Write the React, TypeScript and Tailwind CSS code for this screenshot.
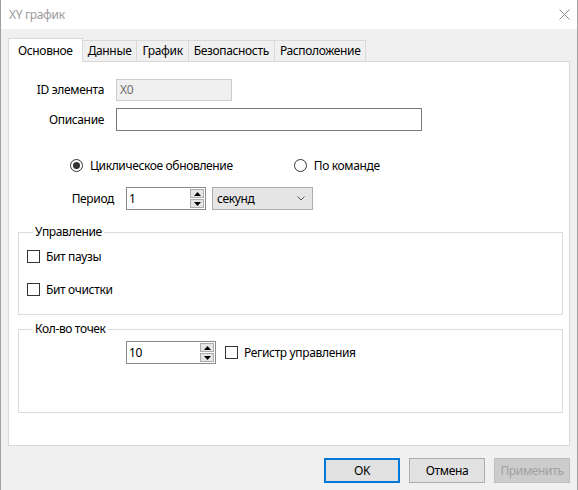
import { useState } from "react";

const font = "font-['Noto_Sans','Segoe_UI',sans-serif] tracking-[-0.35px]";

function Spinner({ value, width }: { value: string; width: string }) {
  return (
    <div className={`relative flex h-[23px] items-center border border-[#8a8a8a] bg-white ${width}`}>
      <span className="pl-[2px] text-[12px] leading-none text-black">{value}</span>
      <div className="absolute right-[1px] top-[1px] flex flex-col gap-[1px]">
        <div className="flex h-[9px] w-[14px] items-center justify-center border border-[#adadad] bg-[#e5e5e5]">
          <svg width="7" height="4" viewBox="0 0 7 4">
            <path d="M0 4 L3.5 0 L7 4 Z" fill="#000" />
          </svg>
        </div>
        <div className="flex h-[9px] w-[14px] items-center justify-center border border-[#adadad] bg-[#e5e5e5]">
          <svg width="7" height="4" viewBox="0 0 7 4">
            <path d="M0 0 L7 0 L3.5 4 Z" fill="#000" />
          </svg>
        </div>
      </div>
    </div>
  );
}

function Radio({ checked, label, onClick }: { checked: boolean; label: string; onClick: () => void }) {
  return (
    <button type="button" onClick={onClick} className="flex items-center gap-[7px]">
      <span className="flex h-[13px] w-[13px] items-center justify-center rounded-full border border-[#333]">
        {checked && <span className="h-[7px] w-[7px] rounded-full bg-[#333]" />}
      </span>
      <span className="text-[12px] leading-none text-black">{label}</span>
    </button>
  );
}

function Check({ label }: { label: string }) {
  const [on, setOn] = useState(false);
  return (
    <button type="button" onClick={() => setOn(!on)} className="flex items-center gap-[6px]">
      <span className="flex h-[13px] w-[13px] items-center justify-center border border-[#333] bg-white">
        {on && (
          <svg width="9" height="9" viewBox="0 0 9 9">
            <path d="M1 4.5 L3.5 7 L8 1.5" stroke="#333" strokeWidth="1.4" fill="none" />
          </svg>
        )}
      </span>
      <span className="text-[12px] leading-none text-black">{label}</span>
    </button>
  );
}

function Group({ title, className, children }: { title: string; className: string; children: React.ReactNode }) {
  return (
    <div className={`relative ml-[9px] w-[545px] border border-[#dcdcdc] ${className}`}>
      <span className="absolute left-[14px] top-[-9px] bg-white px-[2px] text-[12px] leading-[16px] text-black">
        {title}
      </span>
      {children}
    </div>
  );
}

const tabs = ["Основное", "Данные", "График", "Безопасность", "Расположение"];

export default function App() {
  const [mode, setMode] = useState<"cycle" | "cmd">("cycle");
  const [tab, setTab] = useState(0);

  return (
    <div className={`flex h-[490px] w-[578px] flex-col border-x border-[#a0a0a0] bg-[#f0f0f0] ${font}`}>
      {/* title bar */}
      <div className="flex h-[29px] items-center justify-between bg-white pl-[8px] pr-[6px]">
        <span className="text-[12px] text-[#9a9a9a]">XY график</span>
        <svg width="11" height="11" viewBox="0 0 11 11" className="mr-[1px]">
          <path d="M0.5 0.5 L10.5 10.5 M10.5 0.5 L0.5 10.5" stroke="#8c8c8c" strokeWidth="1" />
        </svg>
      </div>

      {/* tabs */}
      <div className="ml-[7px] mt-[9px] flex h-[23px] items-end">
        {tabs.map((t, i) =>
          i === tab ? (
            <button
              key={t}
              onClick={() => setTab(i)}
              className="relative z-10 -mb-px flex h-[24px] items-start border border-b-0 border-[#d9d9d9] bg-white px-[9px] pt-[3px] text-[12px] text-black"
            >
              {t}
            </button>
          ) : (
            <button
              key={t}
              onClick={() => setTab(i)}
              className="-ml-px flex h-[21px] items-center border border-b-0 border-[#d9d9d9] bg-[#f0f0f0] px-[5px] text-[12px] text-black first:ml-0"
            >
              {t}
            </button>
          )
        )}
      </div>

      {/* page */}
      <div className="ml-[7px] flex h-[385px] w-[562px] flex-col border border-[#d9d9d9] bg-white">
        <div className="mt-[17px] flex items-center">
          <span className="w-[95px] text-right text-[12px] text-black">ID элемента</span>
          <div className="ml-[12px] flex h-[22px] w-[116px] items-center border border-[#cccccc] bg-[#f0f0f0] pl-[3px] text-[12px] text-[#6d6d6d]">
            X0
          </div>
        </div>
        <div className="mt-[7px] flex items-center">
          <span className="w-[95px] text-right text-[12px] text-black">Описание</span>
          <div className="ml-[12px] h-[23px] w-[306px] border border-[#7a7a7a] bg-white" />
        </div>

        <div className="ml-[61px] mt-[28px] flex h-[13px] items-center">
          <Radio checked={mode === "cycle"} label="Циклическое обновление" onClick={() => setMode("cycle")} />
          <div className="ml-[61px]">
            <Radio checked={mode === "cmd"} label="По команде" onClick={() => setMode("cmd")} />
          </div>
        </div>

        <div className="mt-[15px] flex items-center">
          <span className="w-[105px] text-right text-[12px] text-black">Период</span>
          <div className="ml-[12px]">
            <Spinner value="1" width="w-[80px]" />
          </div>
          <div className="ml-[6px] flex h-[23px] w-[101px] items-center justify-between border border-[#adadad] bg-[#e5e5e5] pl-[4px] pr-[7px] text-[12px] text-black">
            <span>секунд</span>
            <svg width="8" height="5" viewBox="0 0 8 5">
              <path d="M0.5 0.5 L4 4 L7.5 0.5" stroke="#555" strokeWidth="1" fill="none" />
            </svg>
          </div>
        </div>

        <Group title="Управление" className="mt-[22px] h-[83px]">
          <div className="ml-[8px] mt-[17px]">
            <Check label="Бит паузы" />
          </div>
          <div className="ml-[8px] mt-[20px]">
            <Check label="Бит очистки" />
          </div>
        </Group>

        <Group title="Кол-во точек" className="mt-[14px] h-[84px]">
          <div className="ml-[107px] mt-[11px] flex items-center">
            <Spinner value="10" width="w-[90px]" />
            <div className="ml-[9px]">
              <Check label="Регистр управления" />
            </div>
          </div>
        </Group>
      </div>

      {/* dialog buttons */}
      <div className="ml-[323px] mt-[12px] flex gap-[9px]">
        <button className="h-[25px] w-[76px] border-2 border-[#0078d7] bg-[#e1e1e1] text-[12px] text-black">OK</button>
        <button className="h-[25px] w-[76px] border border-[#adadad] bg-[#e1e1e1] text-[12px] text-black">Отмена</button>
        <button className="h-[25px] w-[76px] border border-[#bfbfbf] bg-[#cccccc] text-[12px] text-[#a0a0a0]">Применить</button>
      </div>
    </div>
  );
}
